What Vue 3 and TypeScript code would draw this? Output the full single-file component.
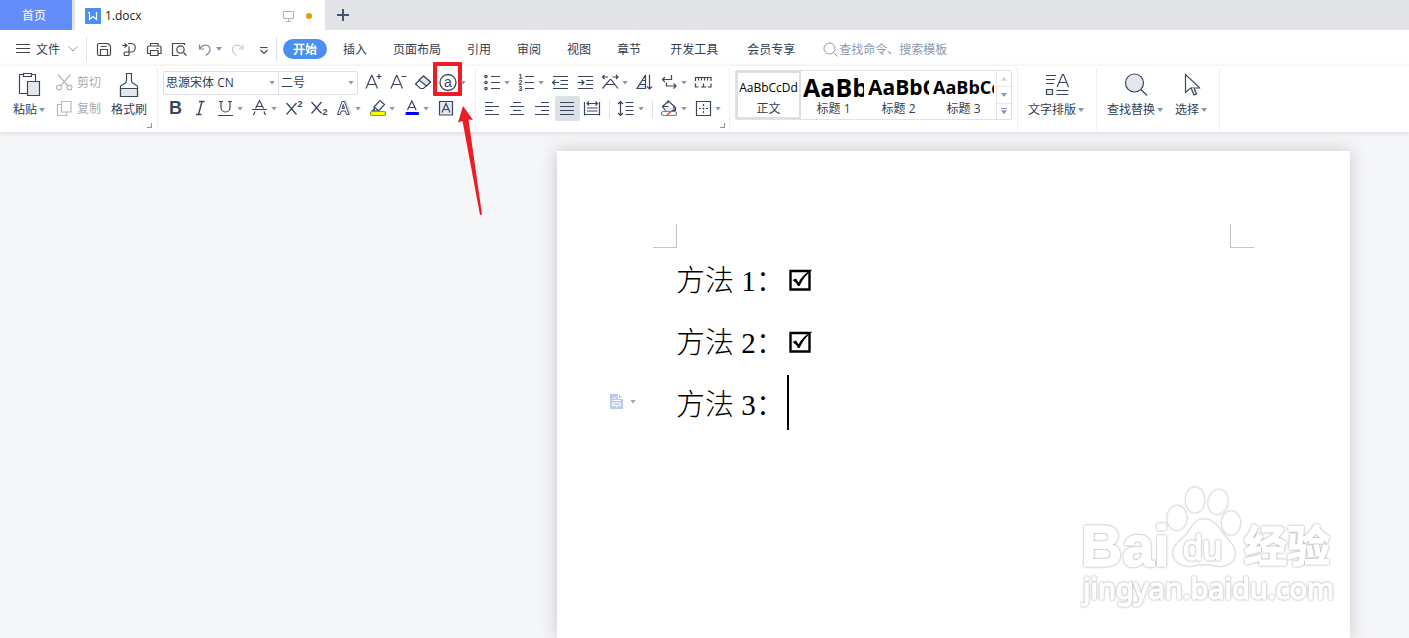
<script setup lang="ts">
import { ref } from 'vue'

interface Tool {
  icon: string
  label: string
  caret?: boolean
  active?: boolean
  marked?: boolean
  sepAfter?: boolean
}

const glyph = (ch: string, x: number, y: number, size: number, extra = '') =>
  `<text x="${x}" y="${y}" font-size="${size}" text-anchor="middle" fill="#3a4560" stroke="none" ${extra}>${ch}</text>`

const icons: Record<string, string> = {
  save: '<path d="M7 6.500h9l2.500 2.500v8q0 1.500-1.500 1.500h-10q-1.500 0-1.500-1.500v-9q0-1.500 1.500-1.500zM8.500 18.500v-6h7v6M8.500 9.500h6"/>',
  export: '<path d="M5.500 8.500h4M7.500 6.500l2.500 2-2.500 2M11 6.500h3a4 4 0 0 1 0 8.500h-2M12 9.500v9M12 15h-4a2 2 0 0 0 0 3.500h4"/>',
  print: '<path d="M8.500 9v-2.500h7.500v2.500M8 16.500h-2.500v-6q0-1.500 1.500-1.500h10.500q1.500 0 1.500 1.500v6h-2.500M8.500 13.500h7.500v5h-7.500zM14.500 11.500h2"/>',
  preview: '<path d="M17.500 8v-1.500h-12v12h6"/><circle cx="13.500" cy="12.500" r="3.700"/><path d="M16.500 15.500l3 3"/>',
  undo: '<path d="M7.500 7.500v4.500h4.500M8 11.500c2-3 5-4 7.500-3s3.500 4.500 1.500 7l-3 3" stroke="#7d89a0"/>',
  redo: '<path d="M17 7.500v4.500h-4.500M16.500 11.500c-2-3-5-4-7.500-3s-3.500 4.500-1.500 7l3 3" stroke="#c9ced6"/>',
  more: '<path d="M9 10.500h7.500M9.500 13l3.500 3.500 3.500-3.500"/>',
  paste: '<path d="M7.500 3.500h-4v19h8M15.500 3.500h4v6.500"/><path d="M7.500 2.500h8v3h-8z"/><path d="M11.500 10.500h12v14h-12z" fill="#e4e7ec"/>',
  cut: '<g stroke="#b6b9bf"><path d="M6 4.500l9.500 11M18.500 4.500l-9.500 11"/><circle cx="7" cy="17.500" r="2.400"/><circle cx="17.500" cy="17.500" r="2.400"/></g>',
  copy: '<g stroke="#b6b9bf" fill="#fff"><path d="M5.500 8.500h9v11h-9z"/><path d="M9.500 5.500h9.500v10.500h-9.500z"/></g>',
  brush: '<path d="M11.500 2.500h5v7q0 2 2 3l4 2.500v10.500h-17v-10.500l4-2.500q2-1 2-3z"/><path d="M5.500 17.500h17v8h-17z" fill="#e4e7ec"/>',
  grow: '<path d="M5 18.500l5.500-13h.5l5.500 13M7 14.500h7.500M15.500 6.500h5M18 4v5"/>',
  shrink: '<path d="M5 18.500l5.500-13h.5l5.500 13M7 14.500h7.500M15.500 6.500h5"/>',
  eraser: '<path d="M12.500 6l7 6-7 6.500h-3l-5-4.500z"/><path d="M12.500 6l7 6-4 4-7.500-6z" fill="#e4e7ec"/>',
  circled: '<circle cx="12" cy="12.500" r="8" stroke-width="1.300"/>' + glyph('a', 12, 17, 14),
  bold: glyph('B', 12.5, 18, 18, 'font-weight="700"'),
  italic: '<path d="M11 5.500h5.500M8 18.500h5.500M14 5.500l-3.500 13" stroke-width="1.400"/>',
  underline: '<path d="M8 5.500v6a4.500 4.500 0 0 0 9 0v-6M6 5.500h4M15 5.500h4M5 19.500h15"/>',
  strike: '<path d="M8.500 12.500l4-8 4 8M10 10.500h5M5 13.500h15M8 15.500l-1.500 3.500M17 15.500l1.500 3.500"/>',
  sup: '<path d="M5.500 7l10 11.500M15.500 7l-10 11.500"/>' + glyph('2', 19, 11, 9, 'font-weight="700"'),
  sub: '<path d="M5.500 6l10 11.500M15.500 6l-10 11.500"/>' + glyph('2', 19, 19, 9, 'font-weight="700"'),
  effect: '<path d="M8 18.500l5.500-13h1l5 13" stroke="#dde0e6" stroke-width="3"/><path d="M6.500 18.500l4.500-13h2.500l4.500 13h-2.500l-1.200-3.500h-4l-1.200 3.500zM11 12.500h2.500l-1.200-4z" fill="#fff" stroke-width="1"/>',
  highlight: '<path d="M9 11l6-6.500 4.500 4-6 6.500h-4zM9 11l5 4M9.500 13l-3 2.500"/><rect x="5.500" y="15.500" width="15" height="4" rx="1.500" fill="#ffff00" stroke="#8b8b60"/>',
  color: '<path d="M8.500 14l4.300-9 4.300 9M10 11.500h5.500"/><rect x="6.500" y="16" width="13.500" height="3" rx="1" fill="#0000ff" stroke="none"/>',
  boxed: '<path d="M6.500 5.500h13v13.500h-13z" fill="#e4e7ec"/><path d="M9 16.500l4-9 4 9M10.500 13.500h5"/>',
  bullets: '<circle cx="6" cy="6.500" r="1.200"/><circle cx="6" cy="12.500" r="1.200"/><circle cx="6" cy="18.500" r="1.200"/><path d="M11 6.500h9M11 12.500h9M11 18.500h9"/>',
  numbers: glyph('1', 6.5, 9, 7, 'font-weight="700"') + glyph('2', 6.5, 15, 7, 'font-weight="700"') + glyph('3', 6.5, 21, 7, 'font-weight="700"') + '<path d="M11 6.500h9M11 12.500h9M11 18.500h9"/>',
  outdent: '<path d="M5 6.500h15M12.500 10.500h7.500M12.500 14.500h7.500M5 18.500h15M4.500 12.500h6.500M7 10l-2.500 2.500 2.500 2.500"/>',
  indent: '<path d="M5 6.500h15M13 10.500h7M13 14.500h7M5 18.500h15M4.500 12.500h6.500M8.500 10l2.500 2.500-2.500 2.500"/>',
  charwidth: '<path d="M4.500 18.500l7.500-9h1l7 9M8 14.500h9M4.500 7h5.500M6.500 5l-2 2 2 2M14.500 7h5.500M18 5l2 2-2 2"/>',
  sort: '<path d="M6.500 15h7.500v3.500h-9z" fill="#e4e7ec" stroke="none"/><path d="M13.500 5v13.500h-8.500l8.500-13.500M10.500 10.500h3M8 14.500h5.500M17.500 4.500v14.500M15 16.500l2.500 2.500 2.500-2.500"/>',
  wrap: '<path d="M14.500 5v4.500h-9M8 7l-2.500 2.500 2.500 2.500M9.500 12.500v3.500h9.500M16.500 13.500l2.500 2.500-2.500 2.500"/>',
  ruler: '<path d="M4.500 11v-3.500h15.500v3.500M7.500 7.500v3M10.500 7.500v3M13.500 7.500v3M16.500 7.500v3M4.500 13.500v3.500h3M10 17h5M12.500 13.500v3.500M17 17h3v-3.500"/>',
  left: '<path d="M5 6.500h8M5 10.500h14M5 14.500h8M5 18.500h14"/>',
  center: '<path d="M8 6.500h8M5 10.500h14M8 14.500h8M5 18.500h14"/>',
  right: '<path d="M11 6.500h8M5 10.500h14M11 14.500h8M5 18.500h14"/>',
  justify: '<path d="M5 6.500h14M5 10.500h14M5 14.500h14M5 18.500h14"/>',
  distribute: '<path d="M4.500 6v13.500M19.500 6v13.500M7 7.500h10.500M9 5.500l-2 2 2 2M15.500 5.500l2 2-2 2M7 12h10.500M7 15h10.500M4.500 18.500h15"/>',
  spacing: '<path d="M6.500 5.500v14M4 8l2.500-2.500 2.500 2.500M4 17l2.500 2.500 2.500-2.500M11.500 6.500h8M11.500 10.500h8M11.500 14.500h8M11.500 18.500h8"/>',
  fill: '<path d="M5.500 10.500l6-5.500 7 6.500v3h-10z" fill="#fff"/><path d="M8 11.500h10l-4 3.500h-5z" fill="#e4e7ec" stroke="none"/><path d="M5.500 10.500h6M11 4.500v3M17 10v4"/><rect x="4.500" y="15.500" width="15" height="4" rx="2" fill="#fff" stroke="#808080"/><path d="M10 19l4-3.500" stroke="#e03c31"/>',
  border: '<path d="M5.500 5.500h14v14h-14z"/><path d="M12.500 8v9M8 12.500h9" stroke-dasharray="2 1.500"/>',
  layout: '<path d="M3 4.500h10M3 8.500h9M3 12.500h8M14 16l5.500-12.500h1l5 12.500M16 11.500h7.500M13.500 19.500h12M13.500 23.500h12"/><path d="M3.500 18.500h6v5h-6z" fill="#e4e7ec"/>',
  find: '<circle cx="12.500" cy="12" r="9" fill="#e4e7ec"/><path d="M19 18.500l6 6"/>',
  select: '<path d="M7.500 3.500v18l5-4.500h9l-.5-1z" fill="#fff"/><path d="M13 17l3 7 2.500-1-2.500-6" fill="#e4e7ec"/>',
}

const quick: Tool[] = [
  { icon: 'save', label: '保存' },
  { icon: 'export', label: '输出' },
  { icon: 'print', label: '打印' },
  { icon: 'preview', label: '打印预览' },
  { icon: 'undo', label: '撤销', caret: true },
  { icon: 'redo', label: '恢复' },
  { icon: 'more', label: '自定义' },
]
const fontTop: Tool[] = [
  { icon: 'grow', label: '增大字号' },
  { icon: 'shrink', label: '减小字号' },
  { icon: 'eraser', label: '清除格式' },
  { icon: 'circled', label: '带圈字符', caret: true, marked: true },
]
const fontBottom: Tool[] = [
  { icon: 'bold', label: '加粗' },
  { icon: 'italic', label: '倾斜' },
  { icon: 'underline', label: '下划线', caret: true },
  { icon: 'strike', label: '删除线', caret: true },
  { icon: 'sup', label: '上标' },
  { icon: 'sub', label: '下标' },
  { icon: 'effect', label: '文字效果', caret: true },
  { icon: 'highlight', label: '突出显示', caret: true },
  { icon: 'color', label: '字体颜色', caret: true },
  { icon: 'boxed', label: '字符底纹' },
]
const paraTop: Tool[] = [
  { icon: 'bullets', label: '项目符号', caret: true },
  { icon: 'numbers', label: '编号', caret: true },
  { icon: 'outdent', label: '减少缩进量' },
  { icon: 'indent', label: '增加缩进量' },
  { icon: 'charwidth', label: '中文版式', caret: true },
  { icon: 'sort', label: '排序' },
  { icon: 'wrap', label: '显示编辑标记', caret: true },
  { icon: 'ruler', label: '制表位' },
]
const paraBottom: Tool[] = [
  { icon: 'left', label: '左对齐' },
  { icon: 'center', label: '居中' },
  { icon: 'right', label: '右对齐' },
  { icon: 'justify', label: '两端对齐', active: true },
  { icon: 'distribute', label: '分散对齐', sepAfter: true },
  { icon: 'spacing', label: '行距', caret: true, sepAfter: true },
  { icon: 'fill', label: '底纹颜色', caret: true },
  { icon: 'border', label: '边框', caret: true },
]
const menus = ['插入', '页面布局', '引用', '审阅', '视图', '章节']
const extraMenus = ['开发工具', '会员专享']
const styles = [
  { sample: 'AaBbCcDd', name: '正文', cls: 'body' },
  { sample: 'AaBb', name: '标题 1', cls: 'h1' },
  { sample: 'AaBbC', name: '标题 2', cls: 'h2' },
  { sample: 'AaBbCc', name: '标题 3', cls: 'h3' },
]
const lines = [
  { text: '方法 1：', checked: true },
  { text: '方法 2：', checked: true },
  { text: '方法 3：', checked: false },
]
const fontName = ref('思源宋体 CN')
const fontSize = ref('二号')
const query = ref('')
</script>

<template>
  <div class="app">
    <header class="tabs">
      <button class="home">首页</button>
      <div class="doc-tab">
        <svg class="logo" viewBox="0 0 16 16" aria-hidden="true">
          <rect width="16" height="16" rx="1" fill="#4a90f2" />
          <path d="M3 4.500h2M4.500 4.500v7l3.500-3 3.500 3v-7.500" fill="none" stroke="#fff" stroke-width="1.200" />
        </svg>
        <span class="doc-name">1.docx</span>
        <svg class="monitor" viewBox="0 0 13 12" aria-hidden="true">
          <path d="M1.500 1.500h10v7h-10zM6.500 8.500v2.500M4 11.500h5" fill="none" stroke="#a9b3c6" />
        </svg>
        <span class="unsaved"></span>
      </div>
      <button class="new-tab" aria-label="新建">
        <svg viewBox="0 0 12 12"><path d="M6 0v12M0 6h12" stroke="#46536e" stroke-width="2" /></svg>
      </button>
    </header>

    <nav class="menu">
      <button class="file">
        <svg class="burger" viewBox="0 0 14 12"><path d="M0 1.500h14M0 5.500h14M0 9.500h14" stroke="#444" /></svg>
        <span class="word">文件</span>
        <svg class="chevron" viewBox="0 0 10 6"><path d="M.5.500l4.500 4.500 4.500-4.500" fill="none" stroke="#999" /></svg>
      </button>
      <div class="quick">
        <button v-for="t in quick" :key="t.icon" class="tool" :aria-label="t.label">
          <svg class="icon dark" viewBox="0 0 25 25" v-html="icons[t.icon]"></svg>
          <span v-if="t.caret" class="caret"></span>
        </button>
      </div>
      <button class="pill">开始</button>
      <div class="items">
        <button v-for="m in menus" :key="m" class="word">{{ m }}</button>
      </div>
      <div class="items extra">
        <button v-for="m in extraMenus" :key="m" class="word">{{ m }}</button>
      </div>
      <label class="search">
        <svg viewBox="0 0 15 15"><circle cx="6.500" cy="6.500" r="5.500" /><path d="M10.500 10.500l4 4" /></svg>
        <input v-model="query" type="text" placeholder="查找命令、搜索模板" aria-label="查找命令、搜索模板" />
      </label>
    </nav>

    <section class="ribbon">
      <div class="group clipboard">
        <div class="content">
          <button class="large">
            <svg viewBox="0 0 28 28" v-html="icons.paste"></svg>
            <span class="caption">粘贴<i class="caret"></i></span>
          </button>
          <div class="stack">
            <button class="small"><svg class="icon" viewBox="0 0 25 25" v-html="icons.cut"></svg>剪切</button>
            <button class="small"><svg class="icon" viewBox="0 0 25 25" v-html="icons.copy"></svg>复制</button>
          </div>
          <button class="large">
            <svg viewBox="0 0 28 28" v-html="icons.brush"></svg>
            <span class="caption">格式刷</span>
          </button>
        </div>
        <button class="launcher" aria-label="剪贴板选项"></button>
      </div>

      <div class="group font">
        <div class="row">
          <div class="combo name">
            <select v-model="fontName" aria-label="字体"><option>思源宋体 CN</option></select>
            <span class="caret"></span>
          </div>
          <div class="combo size">
            <select v-model="fontSize" aria-label="字号"><option>二号</option></select>
            <span class="caret"></span>
          </div>
          <button v-for="t in fontTop" :key="t.icon" class="tool" :class="{ marked: t.marked }" :aria-label="t.label">
            <svg class="icon" viewBox="0 0 25 25" v-html="icons[t.icon]"></svg>
            <span v-if="t.caret" class="caret"></span>
            <svg v-if="t.marked" class="pointer" viewBox="0 0 28 114">
              <path d="M7 2L2 18.500l4.500-1.500L24 111l2-.5L12.500 15.500l4.500.5z" fill="#ed1c24" />
            </svg>
          </button>
        </div>
        <div class="row">
          <button v-for="t in fontBottom" :key="t.icon" class="tool" :aria-label="t.label">
            <svg class="icon" viewBox="0 0 25 25" v-html="icons[t.icon]"></svg>
            <span v-if="t.caret" class="caret"></span>
          </button>
        </div>
      </div>

      <div class="group para">
        <div class="row">
          <button v-for="t in paraTop" :key="t.icon" class="tool" :aria-label="t.label">
            <svg class="icon" viewBox="0 0 25 25" v-html="icons[t.icon]"></svg>
            <span v-if="t.caret" class="caret"></span>
          </button>
        </div>
        <div class="row">
          <template v-for="t in paraBottom" :key="t.icon">
            <button class="tool" :class="{ active: t.active }" :aria-label="t.label">
              <svg class="icon" viewBox="0 0 25 25" v-html="icons[t.icon]"></svg>
              <span v-if="t.caret" class="caret"></span>
            </button>
            <span v-if="t.sepAfter" class="sep"></span>
          </template>
        </div>
        <button class="launcher" aria-label="段落选项"></button>
      </div>

      <div class="group">
        <div class="gallery">
          <button v-for="(s, i) in styles" :key="s.name" class="style" :class="[s.cls, { chosen: i === 0 }]">
            <span class="sample">{{ s.sample }}</span>
            <span class="style-name">{{ s.name }}</span>
          </button>
          <div class="scroller">
            <button aria-label="上一行"><span class="caret up"></span></button>
            <button aria-label="下一行"><span class="caret"></span></button>
            <button aria-label="更多样式"><span class="bar"></span><span class="caret"></span></button>
          </div>
        </div>
      </div>

      <div class="group tail">
        <div class="content">
          <button class="large">
            <svg viewBox="0 0 28 28" v-html="icons.layout"></svg>
            <span class="caption">文字排版<i class="caret"></i></span>
          </button>
        </div>
      </div>
      <div class="group tail">
        <div class="content">
          <button class="large">
            <svg viewBox="0 0 28 28" v-html="icons.find"></svg>
            <span class="caption">查找替换<i class="caret"></i></span>
          </button>
          <button class="large">
            <svg viewBox="0 0 28 28" v-html="icons.select"></svg>
            <span class="caption">选择<i class="caret"></i></span>
          </button>
        </div>
      </div>
    </section>

    <main class="desk">
      <article class="page">
        <div class="corners"><span class="corner start"></span><span class="corner end"></span></div>
        <div class="text">
          <p v-for="l in lines" :key="l.text">
            <span class="words">{{ l.text }}</span>
            <svg v-if="l.checked" class="tick" viewBox="0 0 24 24" role="img" aria-label="已勾选">
              <path d="M2.500 3h19v18.500h-19z" fill="none" stroke="#000" stroke-width="2.400" />
              <path d="M4.500 12l3.500-1.500 2.500 4q4-8 13-13l.5.500q-8 6-12.500 16h-1.500q-2-4-5.500-6z" />
            </svg>
            <template v-else>
              <span class="cursor"></span>
              <button class="para-tool" aria-label="段落布局">
                <svg viewBox="0 0 13 15">
                  <path d="M0 0h8.500l4.500 4.500v10.500h-13z" fill="#b9cdea" />
                  <path d="M8.500 0v4.500h4.500M2.500 4h4M2.500 6.500h8M2.500 9h8v2.500h-8zM6.500 11.500v2" fill="none" stroke="#fff" />
                </svg>
                <span class="caret"></span>
              </button>
            </template>
          </p>
        </div>
        <svg class="watermark" viewBox="0 0 270 130" role="img" aria-label="Baidu 经验">
          <text x="1" y="84" font-size="57" font-weight="700" font-family="Liberation Sans, sans-serif">Bai</text>
          <ellipse cx="97" cy="36" rx="9" ry="11.500" />
          <ellipse cx="115" cy="18" rx="8.500" ry="12" />
          <ellipse cx="138" cy="20" rx="9" ry="11.500" transform="rotate(10 138 20)" />
          <ellipse cx="151" cy="41" rx="8.500" ry="11" />
          <path d="M124 38c9 0 14 8 18 14 5 7 13 12 12 21-1 8-9 11-16 10-10-2-18-2-26 0-9 1-17-3-18-11-1-9 9-13 14-20 5-7 8-14 16-14z" />
          <text x="103" y="78" font-size="35" font-family="Liberation Sans, sans-serif">du</text>
          <text x="164" y="80" font-size="43" font-weight="700" font-family="Noto Sans CJK SC, sans-serif">经验</text>
          <text x="3" y="117" font-size="29" font-family="Noto Sans, sans-serif">jingyan.baidu.com</text>
        </svg>
      </article>
    </main>
  </div>
</template>

<style>
body {
  margin: 0;
}
</style>

<style scoped>
.app {
  min-height: 100vh;
  display: flex;
  flex-direction: column;
  background: #f5f6f8;
  overflow: hidden;
  font: 12px/20px "Open Sans", "Noto Sans CJK SC", sans-serif;
  color: #333d55;
}
.app *,
.app *::before {
  box-sizing: border-box;
}
button {
  margin: 0;
  padding: 0;
  border: 0;
  background: none;
  font: inherit;
  color: inherit;
  white-space: nowrap;
}
svg {
  display: block;
  flex: none;
}
.tabs {
  height: 30px;
  display: flex;
  background: #e1e3e7;
}
.home {
  width: 72px;
  padding: 2px 4px 0 0;
  background: #628dfa;
  color: #fff;
}
.doc-tab {
  width: 250px;
  margin-left: 3px;
  padding: 2px 13px 0 10px;
  display: flex;
  align-items: center;
  background: #fff;
}
.logo {
  width: 16px;
  height: 16px;
}
.doc-name {
  flex: 1;
  padding-left: 4px;
  color: #222;
}
.monitor {
  width: 13px;
  height: 12px;
}
.unsaved {
  width: 6px;
  height: 6px;
  margin-left: 11px;
  border-radius: 50%;
  background: #e89b00;
}
.new-tab {
  width: 36px;
  display: grid;
  place-items: center;
}
.new-tab svg {
  width: 12px;
  height: 12px;
}
.menu {
  height: 36px;
  padding-top: 2px;
  display: flex;
  align-items: center;
  background: #fff;
}
.word {
  padding-top: 2px;
}
.file {
  height: 24px;
  padding: 0 8px 0 16px;
  display: flex;
  align-items: center;
  border-right: 1px solid #dfe2e6;
}
.burger {
  width: 14px;
  height: 12px;
  margin-right: 6px;
}
.chevron {
  width: 10px;
  height: 6px;
  margin-left: 8px;
}
.quick {
  height: 24px;
  display: flex;
  align-items: center;
  padding-left: 5px;
  border-right: 1px solid #dfe2e6;
}
.tool {
  height: 25px;
  display: flex;
  align-items: center;
}
.icon {
  width: 25px;
  height: 25px;
}
.icon,
.large svg {
  fill: none;
  stroke: #3a4560;
  stroke-width: 1.2;
  font-family: "Liberation Sans", sans-serif;
}
.icon.dark {
  stroke: #4a4a4a;
}
.caret {
  width: 6px;
  height: 4px;
  flex: none;
  display: inline-block;
  background: #8993aa;
  clip-path: polygon(0 0, 100% 0, 50% 100%);
}
.tool .caret {
  margin: 0 4px 0 -1px;
}
.pill {
  height: 20px;
  margin: 0 16px 0 6px;
  padding: 1px 10px 0;
  border-radius: 10px;
  background: #4a90f2;
  color: #fff;
  font-weight: 700;
  line-height: 19px;
}
.items {
  display: flex;
  gap: 26px;
}
.items.extra {
  gap: 29px;
  margin: 0 28px 0 29px;
}
.search {
  display: flex;
  align-items: center;
  gap: 1px;
}
.search svg {
  width: 15px;
  height: 15px;
  fill: none;
  stroke: #8d97ad;
}
.search input {
  width: 160px;
  padding: 2px 0 0;
  border: 0;
  outline: 0;
  background: none;
  font: inherit;
}
.search input::placeholder {
  color: #8d97ad;
  opacity: 1;
}
.ribbon {
  position: relative;
  z-index: 1;
  height: 66px;
  padding: 2px 0;
  display: flex;
  background: #fff;
  box-shadow: 0 1px 5px #d4d7dc;
}
.group {
  padding: 2px 5px 0;
  flex: none;
  display: flex;
  flex-direction: column;
  border-right: 1px solid #eceef0;
}
.clipboard {
  padding-left: 13px;
}
.clipboard .content {
  margin-right: 5px;
}
.content {
  display: flex;
  gap: 10px;
}
.large {
  height: 51px;
  padding-top: 1px;
  display: flex;
  flex-direction: column;
  align-items: center;
}
.large svg {
  width: 28px;
  height: 28px;
}
.caption {
  display: flex;
  align-items: center;
  padding-top: 1px;
}
.caption .caret {
  margin: 0 2px;
}
.stack {
  display: flex;
  flex-direction: column;
  gap: 1px;
}
.small {
  display: flex;
  align-items: center;
  color: #a9acb3;
}
.small .icon {
  margin-left: -5px;
}
.launcher {
  width: 5px;
  height: 5px;
  margin-top: 2px;
  align-self: flex-end;
  border: solid #8993aa;
  border-width: 0 1px 1px 0;
}
.row {
  display: flex;
  align-items: center;
}
.row + .row {
  margin-top: 1px;
}
.para {
  padding-left: 4px;
  padding-right: 4px;
}
.combo {
  height: 24px;
  position: relative;
  display: flex;
  align-items: center;
  border: 1px solid #dcdfe4;
}
.combo.name {
  width: 116px;
  border-radius: 2px 0 0 2px;
}
.combo.size {
  width: 80px;
  margin: 0 3px 0 -1px;
  border-radius: 0 2px 2px 0;
}
.combo select {
  width: 100%;
  height: 22px;
  padding: 1px 14px 0 2px;
  appearance: none;
  border: 0;
  background: none;
  font: inherit;
  color: inherit;
}
.combo .caret {
  position: absolute;
  right: 3px;
  pointer-events: none;
}
.marked {
  position: relative;
}
.marked::before {
  content: "";
  position: absolute;
  left: -3px;
  top: -8px;
  width: 29px;
  height: 34px;
  border: 4px solid #ed1c24;
  border-radius: 1px;
}
.pointer {
  position: absolute;
  left: 20px;
  top: 34px;
  width: 28px;
  height: 114px;
}
.active {
  background: #dce1e6;
  border-radius: 2px;
}
.sep {
  width: 1px;
  height: 18px;
  margin: 0 4px;
  background: #dfe2e6;
}
.gallery {
  height: 50px;
  display: flex;
  border: 1px solid #e0e2e6;
  border-radius: 2px;
}
.style {
  width: 65px;
  padding: 0 2px;
  display: flex;
  flex-direction: column;
  align-items: center;
  overflow: hidden;
}
.style.chosen {
  padding: 0;
  box-shadow: inset 0 0 0 2px #dddfe4;
}
.sample {
  width: 100%;
  height: 29px;
  overflow: hidden;
  line-height: 33px;
  text-align: left;
  color: #000;
  font-weight: 700;
}
.style-name {
  padding-top: 1px;
  line-height: 20px;
}
.body .sample {
  text-align: center;
  font-weight: 400;
}
.h1 .sample {
  font-size: 25px;
}
.h2 .sample {
  font-size: 21px;
}
.h3 .sample {
  font-size: 18px;
}
.scroller {
  width: 15px;
  display: flex;
  flex-direction: column;
  border-left: 1px solid #e6e8eb;
}
.scroller button {
  flex: 1;
  display: flex;
  flex-direction: column;
  align-items: center;
  justify-content: center;
  gap: 1px;
}
.scroller button + button {
  border-top: 1px solid #e6e8eb;
}
.caret.up {
  clip-path: polygon(0 100%, 100% 100%, 50% 0);
  background: #cfd4dc;
}
.bar {
  width: 6px;
  height: 1px;
  background: #8993aa;
}
.tail {
  padding-left: 10px;
  padding-right: 10px;
}
.desk {
  flex: 1;
  padding: 19px 59px 0 20px;
  display: flex;
  justify-content: flex-end;
}
.page {
  position: relative;
  flex: 0 1 793px;
  padding: 73px 96px 0;
  background: #fff;
  box-shadow: 0 0 16px #c4c6ca;
}
.corners {
  display: flex;
  justify-content: space-between;
}
.corner {
  width: 24px;
  height: 24px;
  border: solid #c4c4c4;
}
.corner.start {
  border-width: 0 1px 1px 0;
}
.corner.end {
  border-width: 0 0 1px 1px;
}
.text {
  padding: 1px 23px 0;
}
.text p {
  position: relative;
  height: 62px;
  margin: 0;
  display: flex;
  align-items: center;
  color: #000;
  font: 300 29px/60px "Liberation Serif", "Noto Sans CJK SC", serif;
  white-space: nowrap;
}
.words {
  padding-top: 2px;
}
.tick {
  width: 24px;
  height: 24px;
  margin-left: 3px;
}
.cursor {
  width: 2px;
  height: 55px;
  margin: 0 0 4px 2px;
  background: #000;
}
.para-tool {
  position: absolute;
  left: -66px;
  top: 21px;
  display: flex;
  align-items: center;
  gap: 7px;
}
.para-tool svg {
  width: 13px;
  height: 15px;
}
.para-tool .caret {
  background: #a5a5a5;
}
.watermark {
  position: absolute;
  right: 0;
  top: 331px;
  width: 270px;
  height: 130px;
  fill: #fff;
  stroke: #fff;
  stroke-width: 1.5;
  stroke-linejoin: round;
}
.watermark > * {
  filter: drop-shadow(0 0 1px #999);
}
</style>
